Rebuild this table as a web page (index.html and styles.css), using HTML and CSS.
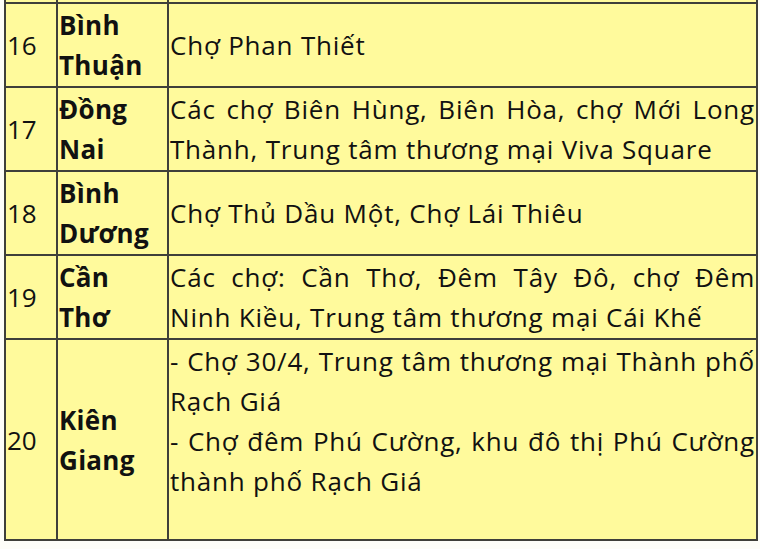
FILE: index.html
```html
<!DOCTYPE html>
<html lang="vi">
<head>
<meta charset="utf-8">
<link rel="stylesheet" href="styles.css">
</head>
<body>
<table class="markets">
  <colgroup>
    <col class="c-num">
    <col class="c-prov">
    <col class="c-desc">
  </colgroup>
  <tr class="prev"><td></td><td></td><td></td></tr>
  <tr class="row">
    <td class="num">16</td>
    <td class="prov">Bình Thuận</td>
    <td class="desc">Chợ Phan Thiết</td>
  </tr>
  <tr class="row">
    <td class="num">17</td>
    <td class="prov">Đồng Nai</td>
    <td class="desc">Các chợ Biên Hùng, Biên Hòa, chợ Mới Long Thành, Trung tâm thương mại Viva Square</td>
  </tr>
  <tr class="row">
    <td class="num">18</td>
    <td class="prov">Bình Dương</td>
    <td class="desc">Chợ Thủ Dầu Một, Chợ Lái Thiêu</td>
  </tr>
  <tr class="row">
    <td class="num">19</td>
    <td class="prov">Cần Thơ</td>
    <td class="desc">Các chợ: Cần Thơ, Đêm Tây Đô, chợ Đêm Ninh Kiều, Trung tâm thương mại Cái Khế</td>
  </tr>
  <tr class="row tall">
    <td class="num">20</td>
    <td class="prov">Kiên Giang</td>
    <td class="desc top">- Chợ 30/4, Trung tâm thương mại Thành phố Rạch Giá<br>- Chợ đêm Phú Cường, khu đô thị Phú Cường thành phố Rạch Giá</td>
  </tr>
</table>
</body>
</html>
```
FILE: styles.css
```css
html, body {
  margin: 0;
  padding: 0;
  background: #fdfdf8;
}
body {
  font-family: "Open Sans", "Noto Sans", sans-serif;
  color: #111;
}
.markets {
  border-collapse: collapse;
  margin-left: 4px;
  margin-top: 0;
  width: 752px;
  table-layout: fixed;
  background: #fffa9c;
  font-size: 26px;
  letter-spacing: 0.8px;
  line-height: 40px;
}
.c-num { width: 52px; }
.c-prov { width: 111px; }
.c-desc { width: 589px; }
.markets td {
  border: 2px solid #3f3f3a;
  padding: 1px 1px;
  vertical-align: middle;
}
.prev td {
  border-top: none;
  height: 2px;
  padding: 0;
}
.num {
  padding-left: 2px;
  letter-spacing: 0;
}
.prov {
  font-weight: 700;
  letter-spacing: 0.3px;
}
.desc {
  text-align: justify;
}
.tall td {
  height: 197px;
}
.markets td.top {
  vertical-align: top;
}
```
